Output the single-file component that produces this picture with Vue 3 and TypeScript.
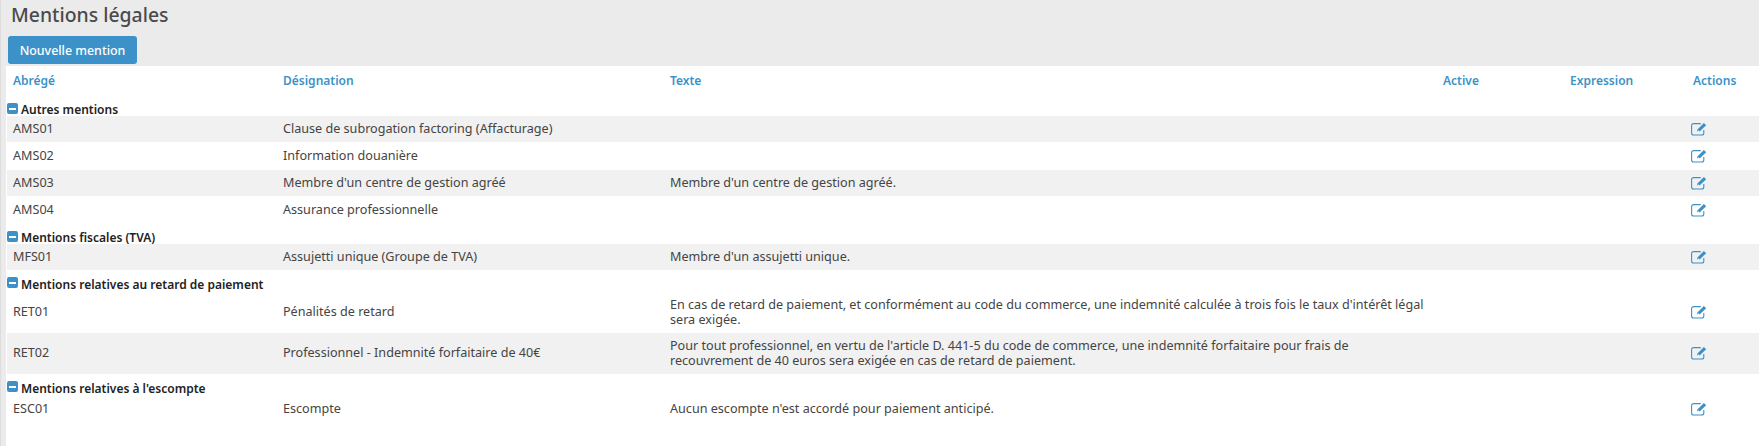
<script setup lang="ts">
interface Row { code: string; name: string; text?: string[]; h: string; band: boolean }
interface Group { title: string; cls: string; rows: Row[] }
const groups: Group[] = [
  { title: 'Autres mentions', cls: 'g20', rows: [
    { code: 'AMS01', name: 'Clause de subrogation factoring (Affacturage)', h: 'r26', band: true },
    { code: 'AMS02', name: 'Information douanière', h: 'r28', band: false },
    { code: 'AMS03', name: "Membre d'un centre de gestion agréé", text: ["Membre d'un centre de gestion agréé."], h: 'r26', band: true },
    { code: 'AMS04', name: 'Assurance professionnelle', h: 'r28', band: false },
  ]},
  { title: 'Mentions fiscales (TVA)', cls: 'g20', rows: [
    { code: 'MFS01', name: 'Assujetti unique (Groupe de TVA)', text: ["Membre d'un assujetti unique."], h: 'r26', band: true },
  ]},
  { title: 'Mentions relatives au retard de paiement', cls: 'g22', rows: [
    { code: 'RET01', name: 'Pénalités de retard', text: ["En cas de retard de paiement, et conformément au code du commerce, une indemnité calculée à trois fois le taux d'intérêt légal", 'sera exigée.'], h: 'r41', band: false },
    { code: 'RET02', name: 'Professionnel - Indemnité forfaitaire de 40€', text: ["Pour tout professionnel, en vertu de l'article D. 441-5 du code de commerce, une indemnité forfaitaire pour frais de", 'recouvrement de 40 euros sera exigée en cas de retard de paiement.'], h: 'r41', band: true },
  ]},
  { title: "Mentions relatives à l'escompte", cls: 'g22', rows: [
    { code: 'ESC01', name: 'Escompte', text: ["Aucun escompte n'est accordé pour paiement anticipé."], h: 'r26', band: false },
  ]},
]
</script>

<template>
  <div class="page">
    <div class="head">
      <h1>Mentions légales</h1>
      <button class="btn">Nouvelle mention</button>
    </div>
    <div class="table">
      <div class="row th">
        <span>Abrégé</span><span>Désignation</span><span>Texte</span><span>Active</span><span>Expression</span><span>Actions</span>
      </div>
      <template v-for="g in groups" :key="g.title">
        <div class="group" :class="g.cls"><span class="minus"><i></i></span><b>{{ g.title }}</b></div>
        <div v-for="r in g.rows" :key="r.code" class="row" :class="[r.h, { band: r.band }]">
          <span>{{ r.code }}</span>
          <span>{{ r.name }}</span>
          <span class="txt"><template v-if="r.text"><div v-for="l in r.text" :key="l">{{ l }}</div></template></span>
          <span></span><span></span>
          <span class="act">
            <svg width="17" height="15" viewBox="0 0 17 15" fill="none">
              <path d="M12.8 9v3a2 2 0 0 1-2 2H2.6a2 2 0 0 1-2-2V4.6a2 2 0 0 1 2-2h7.2" stroke="#3c92c8" stroke-width="1.1"/>
              <path d="M5.8 11 6.4 8.4 12.9 1.9 15.2 4.2 8.6 10.6 7.2 9.3Z" fill="#3c92c8"/>
            </svg>
          </span>
        </div>
      </template>
    </div>
  </div>
</template>

<style scoped>
.page { width: 1759px; height: 446px; background: #fff; font-family: "Noto Sans", sans-serif; font-size: 12.6px; color: #444; overflow: hidden; position: relative; }
.page::before { content: ""; position: absolute; left: 0; top: 0; bottom: 0; width: 6px; background: #ebebeb; border-left: 1px solid #ddd; box-sizing: border-box; }
.head { background: #ebebeb; height: 66px; padding-left: 8px; box-sizing: border-box; overflow: hidden; }
h1 { margin: 0; padding: 2px 0 0 3px; font-size: 19.4px; line-height: 26px; font-weight: 500; color: #4a4a4a; }
.btn { display: block; margin-top: 8px; width: 129px; height: 28px; padding: 0; border: 0; border-radius: 3px; background: #3c92c8; color: #fff; font: 500 12.4px "Noto Sans", sans-serif; }
.table { margin-left: 6px; position: relative; }
.row { display: grid; grid-template-columns: 270px 387px 773px 127px 123px 1fr; align-items: center; margin-left: 1px; padding-left: 6px; padding-bottom: 2px; box-sizing: border-box; }
.row.th { height: 30px; padding-bottom: 1px; color: #3c92c8; font-weight: 600; font-size: 12px; }
.group { display: flex; align-items: flex-start; color: #222; font-weight: 600; font-size: 12px; box-sizing: border-box; }
.g20 { height: 20px; }
.g22 { height: 22px; }
.group b { font-weight: 600; margin-left: 3px; margin-top: 4px; line-height: 19px; }
.g22 b { margin-top: 5px; }
.minus { width: 11px; height: 11px; border-radius: 2px; background: #3c92c8; margin-left: 1px; margin-top: 7px; display: flex; align-items: center; justify-content: center; }
.minus i { width: 7px; height: 2px; background: #fff; }
.band { background: #f1f1f1; }
.r26 { height: 26px; }
.r28 { height: 28px; }
.r41 { height: 41px; }
.txt { line-height: 15px; }
.act { display: flex; margin-left: -2px; }
.act svg { display: block; }
</style>
